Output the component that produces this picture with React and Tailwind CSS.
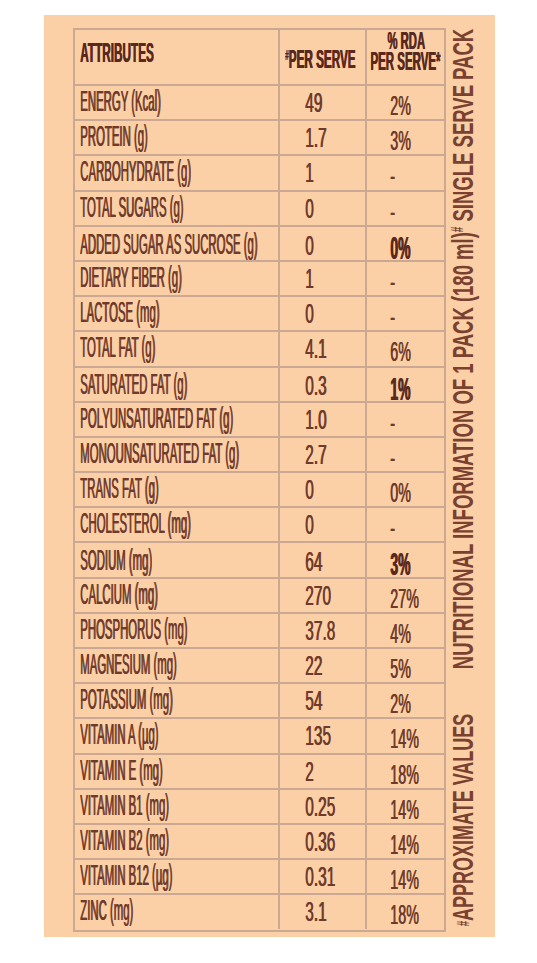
import React from "react";

const rows = [
  ["ENERGY (Kcal)", "49", "2%"],
  ["PROTEIN (g)", "1.7", "3%"],
  ["CARBOHYDRATE (g)", "1", "-"],
  ["TOTAL SUGARS (g)", "0", "-"],
  ["ADDED SUGAR AS SUCROSE (g)", "0", "0%", true],
  ["DIETARY FIBER (g)", "1", "-"],
  ["LACTOSE (mg)", "0", "-"],
  ["TOTAL FAT (g)", "4.1", "6%"],
  ["SATURATED FAT (g)", "0.3", "1%", true],
  ["POLYUNSATURATED FAT (g)", "1.0", "-"],
  ["MONOUNSATURATED FAT (g)", "2.7", "-"],
  ["TRANS FAT (g)", "0", "0%"],
  ["CHOLESTEROL (mg)", "0", "-"],
  ["SODIUM (mg)", "64", "3%", true],
  ["CALCIUM (mg)", "270", "27%"],
  ["PHOSPHORUS (mg)", "37.8", "4%"],
  ["MAGNESIUM (mg)", "22", "5%"],
  ["POTASSIUM (mg)", "54", "2%"],
  ["VITAMIN A (µg)", "135", "14%"],
  ["VITAMIN E (mg)", "2", "18%"],
  ["VITAMIN B1 (mg)", "0.25", "14%"],
  ["VITAMIN B2 (mg)", "0.36", "14%"],
  ["VITAMIN B12 (µg)", "0.31", "14%"],
  ["ZINC (mg)", "3.1", "18%"],
];

const font = "font-['Liberation_Sans',Arial,sans-serif]";

export default function App() {
  return (
    <div className={`min-h-[963px] w-[537px] bg-white pt-[15px] pl-[44px] ${font}`}>
      <div className="flex h-[922px] w-[451px] bg-[#fcd0a6] pt-[13px] pl-[29px]">
        {/* table */}
        <div className="h-[904px] w-[373px] shrink-0 border-2 border-[#caa893] text-[#6f3a2b]">
          {/* header */}
          <div className="grid h-[54px] grid-cols-[205px_87px_77px] text-[#5a281c]">
            <div className="flex items-center border-r-2 border-[#caa893] pl-[5px] pb-[8px] overflow-visible">
              <span className="inline-block shrink-0 origin-left scale-x-[0.42] whitespace-nowrap text-[28px] font-bold leading-none [text-shadow:1.4px_0_0_#5a281c]">
                ATTRIBUTES
              </span>
            </div>
            <div className="flex items-center border-r-2 border-[#caa893] pl-[5px] pt-[3px] overflow-visible">
              <span className="inline-block shrink-0 origin-left scale-x-[0.45] whitespace-nowrap text-[26px] font-bold leading-none [text-shadow:1.3px_0_0_#5a281c]">
                <span className="align-[8px] text-[14px]">#</span>PER SERVE
              </span>
            </div>
            <div className="flex flex-col items-center justify-center gap-[2px] pb-[12px] overflow-visible">
              <span className="inline-block shrink-0 scale-x-[0.47] whitespace-nowrap text-[24px] font-bold leading-[18px] [text-shadow:1.3px_0_0_#5a281c]">
                % RDA
              </span>
              <span className="inline-block shrink-0 scale-x-[0.46] whitespace-nowrap text-[25px] font-bold leading-[19px] [text-shadow:1.3px_0_0_#5a281c]">
                PER SERVE*
              </span>
            </div>
          </div>
          {/* body */}
          {rows.map(([name, val, rda, bold]) => (
            <div
              key={name}
              className="grid h-[35.2px] grid-cols-[205px_87px_77px] border-t-2 border-[#caa893]"
            >
              <div className="flex items-center border-r-2 border-[#caa893] pl-[5px] pb-[4px] overflow-visible">
                <span className="inline-block shrink-0 origin-left scale-x-[0.385] whitespace-nowrap text-[29.5px] leading-none [text-shadow:1.6px_0_0_#6f3a2b]">
                  {name}
                </span>
              </div>
              <div className="flex items-center border-r-2 border-[#caa893] pl-[25px] overflow-visible">
                <span className="inline-block shrink-0 origin-left scale-x-[0.56] whitespace-nowrap text-[27.5px] leading-none [text-shadow:1.1px_0_0_#6f3a2b]">
                  {val}
                </span>
              </div>
              <div className="flex items-center pl-[23px] pt-[6px] overflow-visible">
                {bold ? (
                  <span className="inline-block shrink-0 origin-left scale-x-[0.45] whitespace-nowrap text-[31px] font-bold leading-none text-[#5a281c] [text-shadow:1.6px_0_0_#5a281c]">
                    {rda}
                  </span>
                ) : (
                  <span className="inline-block shrink-0 origin-left scale-x-[0.52] whitespace-nowrap text-[27.5px] leading-none [text-shadow:1.1px_0_0_#6f3a2b]">
                    {rda}
                  </span>
                )}
              </div>
            </div>
          ))}
        </div>
        {/* vertical caption */}
        <div className="flex w-[49px] flex-col pt-[2px] pr-[15px] text-[#7a4030]">
          <div className="flex h-[638px] items-center justify-center">
            <span className="inline-block shrink-0 whitespace-nowrap text-[30px] font-bold leading-none [transform:rotate(-90deg)_scaleX(0.617)]">
              NUTRITIONAL INFORMATION OF 1 PACK (180 ml)
              <span className="align-[10px] text-[16px]">#</span> SINGLE SERVE PACK
            </span>
          </div>
          <div className="mt-[44px] flex h-[216px] items-center justify-center">
            <span className="inline-block shrink-0 whitespace-nowrap text-[30px] font-bold leading-none [transform:rotate(-90deg)_scaleX(0.6)]">
              <span className="align-[4px] text-[16px]">#</span>APPROXIMATE VALUES
            </span>
          </div>
        </div>
      </div>
    </div>
  );
}
